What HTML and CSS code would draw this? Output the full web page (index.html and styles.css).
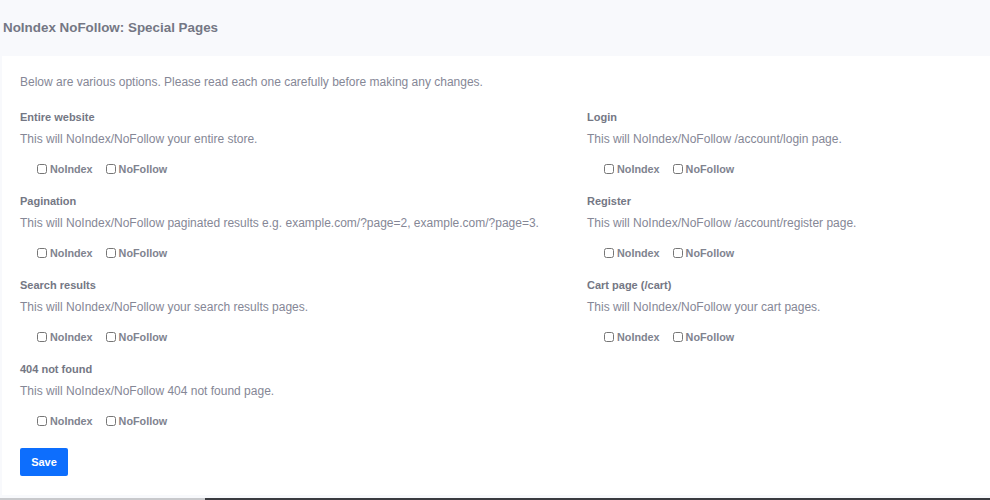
FILE: index.html
```html
<!DOCTYPE html>
<html lang="en">
<head>
    <meta charset="UTF-8">
    <meta name="viewport" content="width=device-width, initial-scale=1.0">
    <title>NoIndex NoFollow: Special Pages</title>
    <link rel="stylesheet" href="styles.css">
</head>
<body>
    <header class="page-header">
        <h1>NoIndex NoFollow: Special Pages</h1>
    </header>

    <main class="card">
        <p class="intro">Below are various options. Please read each one carefully before making any changes.</p>

        <form class="options">
            <div class="option">
                <h2>Entire website</h2>
                <p>This will NoIndex/NoFollow your entire store.</p>
                <div class="checks">
                    <label><input type="checkbox"> NoIndex</label>
                    <label><input type="checkbox"> NoFollow</label>
                </div>
            </div>
            <div class="option">
                <h2>Login</h2>
                <p>This will NoIndex/NoFollow /account/login page.</p>
                <div class="checks">
                    <label><input type="checkbox"> NoIndex</label>
                    <label><input type="checkbox"> NoFollow</label>
                </div>
            </div>
            <div class="option">
                <h2>Pagination</h2>
                <p>This will NoIndex/NoFollow paginated results e.g. example.com/?page=2, example.com/?page=3.</p>
                <div class="checks">
                    <label><input type="checkbox"> NoIndex</label>
                    <label><input type="checkbox"> NoFollow</label>
                </div>
            </div>
            <div class="option">
                <h2>Register</h2>
                <p>This will NoIndex/NoFollow /account/register page.</p>
                <div class="checks">
                    <label><input type="checkbox"> NoIndex</label>
                    <label><input type="checkbox"> NoFollow</label>
                </div>
            </div>
            <div class="option">
                <h2>Search results</h2>
                <p>This will NoIndex/NoFollow your search results pages.</p>
                <div class="checks">
                    <label><input type="checkbox"> NoIndex</label>
                    <label><input type="checkbox"> NoFollow</label>
                </div>
            </div>
            <div class="option">
                <h2>Cart page (/cart)</h2>
                <p>This will NoIndex/NoFollow your cart pages.</p>
                <div class="checks">
                    <label><input type="checkbox"> NoIndex</label>
                    <label><input type="checkbox"> NoFollow</label>
                </div>
            </div>
            <div class="option">
                <h2>404 not found</h2>
                <p>This will NoIndex/NoFollow 404 not found page.</p>
                <div class="checks">
                    <label><input type="checkbox"> NoIndex</label>
                    <label><input type="checkbox"> NoFollow</label>
                </div>
            </div>
        </form>

        <button type="button" class="btn-save">Save</button>
    </main>

    <div class="bottom-bar"></div>
</body>
</html>
```

FILE: styles.css
```css
/* Reset */
* {
    box-sizing: border-box;
    margin: 0;
    padding: 0;
}

body {
    background: #f8f9fc;
    font-family: "Liberation Sans", Arial, sans-serif;
    color: #858796;
    width: 990px;
    height: 500px;
    overflow: hidden;
}

/* Header */
.page-header {
    height: 56px;
    padding: 0 3px;
    display: flex;
    align-items: center;
}

.page-header h1 {
    font-size: 13.4px;
    font-weight: bold;
    color: #747784;
    margin-top: -2px;
}

/* Card */
.card {
    background: #fff;
    margin-left: 2px;
    height: 439px;
    padding: 18px 18px 0;
}

.intro {
    font-size: 12px;
    line-height: 16px;
    margin-bottom: 20px;
}

/* Options grid */
.options {
    display: grid;
    grid-template-columns: 567px 1fr;
    grid-auto-rows: 84px;
}

.option h2 {
    font-size: 11px;
    line-height: 14px;
    font-weight: bold;
    color: #747784;
    margin-bottom: 7px;
}

.option p {
    font-size: 12px;
    line-height: 16px;
    margin-bottom: 15px;
}

.checks {
    display: flex;
    gap: 13px;
    padding-left: 17px;
    height: 14px;
    align-items: center;
}

.checks label {
    display: flex;
    align-items: center;
    gap: 3px;
    font-size: 10.8px;
    font-weight: bold;
    color: #80838f;
}

.checks input {
    width: 10px;
    height: 10px;
    margin: 0;
}

/* Save button */
.btn-save {
    margin-top: 2px;
    width: 48px;
    height: 28px;
    background: #0d6efd;
    color: #fff;
    border: none;
    border-radius: 2px;
    font-family: "Liberation Sans", Arial, sans-serif;
    font-size: 11px;
    font-weight: bold;
}

.bottom-bar {
    margin-top: 3px;
    height: 2px;
    background: linear-gradient(to right, #c8c9cc 0, #c8c9cc 205px, #3a3c40 205px);
}
```
